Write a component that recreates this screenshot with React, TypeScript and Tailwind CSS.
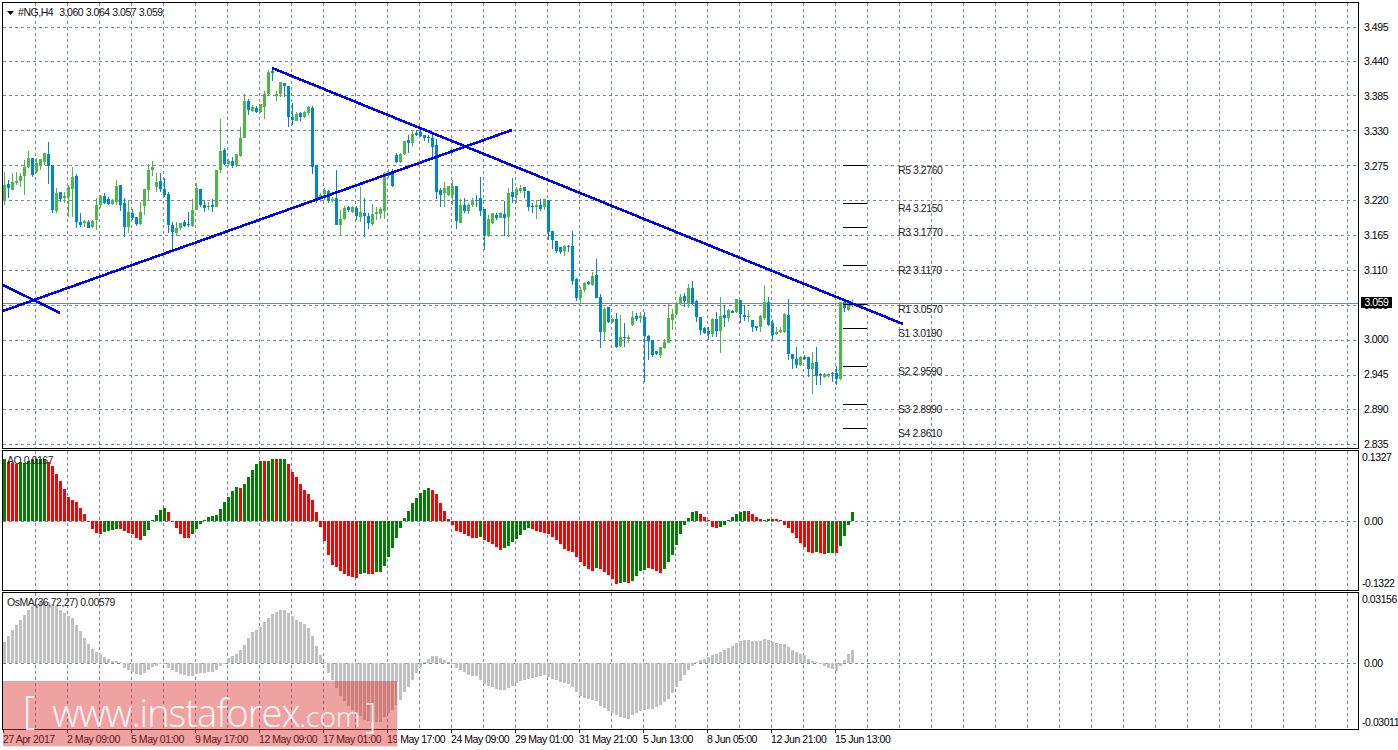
// #NG,H4 chart with AO and OsMA sub-windows
type Candle = [number, number, number, number, number] // wick top, body top, body bottom, wick bottom, up (all y values x3)

const candlesLeft: Candle[] = [
  [517,555,600,615,1],[540,552,565,595,0],[520,545,570,570,1],[515,543,550,555,1],[520,528,543,560,1],[480,500,528,585,1],[452,474,500,505,1],[474,474,525,530,0],
  [475,490,515,520,1],[478,478,498,510,1],[460,460,487,495,1],[426,462,497,552,0],[496,496,630,640,0],[565,578,633,640,1],[576,576,598,605,0],[575,588,594,610,1],
  [555,560,590,650,1],[500,532,567,652,1],[522,528,665,685,0],[640,666,675,680,0],[660,664,668,680,1],[660,665,683,685,0],[660,664,682,685,1],[595,615,660,690,1],
  [585,588,615,625,1],[578,588,608,612,0],[592,598,612,615,0],[598,603,612,615,1],[540,558,605,615,1],[555,555,615,632,0],[595,610,682,710,0],[600,637,682,698,1],
  [628,640,654,660,0],[650,650,672,678,0],[605,637,672,675,1],[568,568,617,645,1],[492,510,570,600,1],[482,501,510,528,1],[520,546,560,575,1],[520,544,567,575,0],
  [535,568,585,590,0],[575,582,675,700,0],[665,675,696,750,0],[665,684,698,708,1],[668,670,684,690,1],[660,666,678,682,0],[635,672,675,680,0],[598,630,678,680,1],
  [548,565,630,630,1],[567,567,615,620,0],[600,615,623,635,0],[605,618,622,630,1],[598,616,621,635,0],[510,510,620,620,1],[358,453,510,520,1],[445,450,492,495,0],
  [478,484,492,498,1],[470,484,498,503,0],[462,463,496,500,1],[382,415,468,470,1],[282,304,414,415,1],[296,303,330,345,0],[316,322,332,336,1],[318,323,335,338,0],
  [312,312,335,338,1],[272,282,320,358,1],[210,215,282,284,1],[203,214,218,242,0],[272,283,288,302,1],[247,247,283,290,1],[250,250,258,292,0],[258,258,350,380,0],
  [310,352,360,375,0],[336,342,362,362,1],[335,340,351,362,0],[332,335,350,355,1],[318,320,340,345,1],[318,324,500,522,0],[496,496,600,610,0],[578,586,594,605,1],
  [565,570,583,600,1],[570,574,604,608,0],[590,597,603,605,1],[510,594,674,675,0],[630,657,675,706,1],[618,624,657,660,1],[618,621,630,635,0],[618,621,635,640,1],
  [618,624,648,660,0],[562,636,650,665,1],[595,640,647,710,0],[640,648,668,688,0],[612,642,672,678,1],[620,636,642,660,1],[620,627,642,657,1],[515,520,633,658,1],
  [508,520,528,535,1],[508,518,558,562,0],[460,464,487,490,0],[458,462,486,488,1],[423,423,462,465,1],[405,420,430,458,0],[392,402,430,440,1],[390,398,404,408,0],
  [380,396,408,412,0],[405,405,413,424,0],[405,411,413,428,0],[405,413,441,470,0],[418,436,575,597,0],[565,570,585,620,0],[545,565,580,620,1],[558,558,585,588,1],
  [540,558,585,615,1],[558,558,662,686,0],[598,615,668,668,1],
]

// read off the right half of the chart, 450 lower down
const candlesRight: Candle[] = ([
  [145,165,183,190,0],[158,165,183,192,1],[145,152,165,170,1],[135,150,152,170,0],[82,145,183,198,0],[178,178,255,300,0],[195,208,258,260,1],[188,190,218,222,1],
  [188,195,203,210,0],[185,188,203,205,1],[152,192,204,258,0],[115,128,200,260,1],[85,126,140,160,0],[112,118,135,160,1],[105,115,122,130,1],[112,112,122,145,0],
  [122,122,172,183,0],[158,168,172,190,0],[150,165,172,206,1],[148,165,178,182,0],[146,148,172,180,1],[150,150,246,270,0],[244,244,270,298,0],[272,272,303,308,0],
  [290,290,305,312,0],[285,288,303,318,1],[284,288,292,305,0],[243,288,393,405,0],[385,387,443,452,0],[412,420,443,458,1],[395,398,421,425,1],[392,397,402,406,0],
  [365,378,405,408,1],[327,376,443,445,0],[432,440,545,593,0],[470,476,545,570,1],[470,472,517,520,0],[505,508,516,520,1],[490,508,590,593,0],[495,561,588,590,1],
  [520,560,565,590,0],[555,562,568,578,1],[483,502,525,528,1],[490,498,508,513,0],[486,498,504,520,1],[485,502,557,696,0],[555,558,572,630,0],[570,570,615,622,0],
  [604,604,612,615,0],[590,592,615,624,1],[568,576,594,597,1],[462,504,578,580,1],[478,492,510,540,1],[455,458,492,495,1],[432,440,458,465,1],[430,438,453,470,0],
  [402,414,458,475,1],[393,414,462,465,0],[450,452,500,515,0],[500,500,540,555,0],[530,534,548,552,0],[530,544,552,570,0],[505,507,552,560,1],[486,506,542,560,0],
  [442,498,542,608,1],[465,495,503,530,0],[478,480,503,517,1],[480,483,488,490,0],[447,447,486,490,1],[450,450,492,520,0],[465,495,500,513,0],[480,497,500,515,1],
  [510,510,530,545,0],[528,528,534,542,0],[496,498,530,546,1],[405,456,504,510,1],[440,456,525,528,0],[510,520,556,570,0],[530,546,552,556,1],[530,540,546,550,1],
  [490,492,546,548,1],[447,495,612,630,0],[612,612,628,658,0],[590,627,645,655,0],[618,620,645,648,1],[615,621,628,630,0],[620,622,658,680,0],[605,638,658,732,1],
  [590,636,678,705,0],[668,672,675,705,0],[668,672,680,685,1],[668,672,678,682,1],[665,670,672,695,0],[648,670,688,705,0],[456,456,688,690,1],[450,456,474,486,0],
  [455,462,480,484,1],[448,460,463,470,1],
] as Candle[]).map(([a, b, c, d, up]) => [a + 450, b + 450, c + 450, d + 450, up] as Candle)

const candles = [...candlesLeft, ...candlesRight]

// bar heights above/below the zero line, x3
const aoValues = [
  187,178,175,172,176,175,181,186,187,187,187,178,166,142,121,97,73,64,58,40,22,-2,-23,-35,-38,-32,-29,-26,-23,-23,-29,-35,-38,-50,-56,-44,-26,1,19,34,40,28,-2,-20,-38,-50,-50,-38,-23,-8,
  4,13,16,19,37,58,73,91,103,100,112,133,154,172,181,181,181,187,187,187,187,172,148,133,112,94,82,64,28,-17,-59,-101,-131,-137,-149,-158,-164,-167,-170,-158,-155,-158,-158,-152,-152,-134,-107,-80,-50,-20,
  10,31,55,70,85,94,100,94,82,55,31,7,-11,-29,-32,-38,-44,-50,-50,-47,-56,-62,-68,-77,-86,-80,-74,-62,-53,-41,-26,-20,-23,-29,-32,-35,-38,-47,-56,-68,-83,-89,-92,-107,-122,-134,-143,-149,-140,-143,
  -152,-161,-173,-188,-185,-182,-185,-179,-164,-149,-146,-140,-143,-149,-155,-143,-122,-101,-71,-38,-11,10,28,31,22,13,1,-17,-20,-17,-11,4,13,22,28,31,31,22,13,7,4,7,7,7,4,-11,-20,-35,-50,-65,
  -77,-92,-95,-92,-95,-98,-95,-95,-95,-74,-44,-11,28,
]

// green/red run lengths, starting with green
const aoRuns = [1,3,7,14,4,6,6,6,12,1,5,1,2,1,2,18,2,2,14,12,1,5,7,16,1,5,2,1,4,4,9,5,7,4,2,11,1,2,2,1,4]
const aoColors = aoRuns.flatMap((n, i) => Array<string>(n).fill(i % 2 === 0 ? '#008000' : '#ff0000'))

const osmaValues = [
  64,82,100,115,130,145,160,170,178,182,184,182,178,170,160,151,142,136,115,97,76,58,43,34,28,19,13,7,7,1,-14,-20,-26,-32,-35,-30,-22,-12,-8,-4,-2,-14,-22,-26,-32,-35,-38,-38,-34,-31,
  -29,-28,-28,-20,-8,-4,14,22,28,40,55,76,92,100,108,122,134,148,154,158,160,150,142,130,122,118,106,82,52,25,1,-30,-50,-76,-100,-115,-130,-140,-148,-158,-172,-175,-178,-178,-176,-162,-150,-140,-125,-110,
  -88,-72,-50,-30,-12,1,12,22,20,14,10,4,-2,-14,-20,-28,-35,-38,-40,-50,-62,-68,-71,-77,-80,-80,-74,-68,-59,-53,-50,-47,-44,-41,-38,-35,-41,-47,-50,-56,-59,-62,-71,-86,-100,-105,-107,-112,-115,-128,
  -134,-143,-149,-155,-161,-164,-167,-155,-149,-144,-140,-137,-137,-133,-125,-116,-107,-89,-71,-53,-35,-20,-8,3,8,12,18,24,27,33,39,45,51,60,66,69,69,66,66,66,72,69,63,60,57,57,48,39,33,27,
  24,12,6,1,-3,-9,-15,-18,-23,-8,9,27,39,
]

const gridX = Array.from({ length: 42 }, (_, i) => 35 + i * 32)
const gridY = [27, 61, 95, 130, 165, 200, 235, 270, 305, 340, 375, 409, 444]

const priceLabels = ['3.495','3.440','3.385','3.330','3.275','3.220','3.165','3.110','3.055','3.000','2.945','2.890','2.835']

const pivots: [string, number, number][] = [
  ['R5 3.2760', 165, 174],['R4 3.2150', 203, 212],['R3 3.1770', 227, 236],['R2 3.1170', 265, 274],['R1 3.0570', 304, 313],
  ['S1 3.0190', 328, 337],['S2 2.9590', 366, 375],['S3 2.8990', 404, 413],['S4 2.8610', 428, 437],
]

const timeLabels = [
  '27 Apr 2017','2 May 09:00','5 May 01:00','9 May 17:00','12 May 09:00','17 May 01:00','19 May 17:00','24 May 09:00',
  '29 May 01:00','31 May 21:00','5 Jun 13:00','8 Jun 05:00','12 Jun 21:00','15 Jun 13:00',
]

const UP = '#4cb848'
const DOWN = '#0087c7'
const GRID = '#778899'
const chartFont = 'font-["Liberation_Sans",Arial,sans-serif] text-[10.5px] tracking-[-0.45px]'

function Grid({ top, bottom, zeroY }: { top: number; bottom: number; zeroY?: number[] }) {
  return (
    <g stroke={GRID} strokeDasharray="3 3" shapeRendering="crispEdges">
      {gridX.map((x) => (
        <line key={x} x1={x + 0.5} x2={x + 0.5} y1={top} y2={bottom} />
      ))}
      {zeroY?.map((y) => (
        <line key={y} x1={3} x2={1358} y1={y + 0.5} y2={y + 0.5} />
      ))}
    </g>
  )
}

function Bars({ values, colors, zero }: { values: number[]; colors: (i: number) => string; zero: number }) {
  return (
    <g shapeRendering="crispEdges">
      {values.map((v, i) => {
        const h = Math.max(Math.abs(v) / 3, 1)
        return <rect key={i} x={3 + i * 4} y={v > 0 ? zero - h : zero} width={3} height={h} fill={colors(i)} />
      })}
    </g>
  )
}

function MainPanel() {
  return (
    <div className={`flex h-[447px] ${chartFont}`}>
      <div className="relative w-[1357px] border border-black bg-white">
        <svg viewBox="3 3 1355 445" width={1355} height={445} className="block">
          <Grid top={3} bottom={448} zeroY={gridY} />
          <line x1={3} x2={1358} y1={303.5} y2={303.5} stroke={GRID} shapeRendering="crispEdges" />
          <g shapeRendering="crispEdges">
            {candles.map(([wickTop, bodyTop, bodyBottom, wickBottom, up], i) => {
              const x = 3 + i * 4
              return (
                <g key={i} fill={up ? UP : DOWN}>
                  <rect x={x + 1} y={wickTop / 3} width={1} height={(wickBottom - wickTop) / 3} />
                  <rect x={x} y={bodyTop / 3} width={3} height={Math.max((bodyBottom - bodyTop) / 3, 1)} />
                </g>
              )
            })}
            {pivots.map(([name, y]) => (
              <line key={name} x1={843} x2={867} y1={y + 0.5} y2={y + 0.5} stroke="#000" />
            ))}
          </g>
          <g stroke="#0000ff" strokeWidth={2.6} shapeRendering="crispEdges">
            <line x1={3} y1={285} x2={60} y2={313} />
            <line x1={3} y1={311} x2={512} y2={130} />
            <line x1={272} y1={68} x2={903} y2={324} />
          </g>
          <g fill="#222">
            {pivots.map(([name, , y]) => (
              <text key={name} x={898} y={y}>
                {name}
              </text>
            ))}
          </g>
        </svg>
        {/* chart title */}
        <div className="absolute left-[4px] top-[2px] flex items-center text-[#111]">
          <svg viewBox="0 0 7 4" width={7} height={4} className="mr-[4px]">
            <path d="M0 0h7L3.5 4z" fill="#000" />
          </svg>
          <span className="mr-[6px]">#NG,H4</span>
          <span>3.060 3.064 3.057 3.059</span>
        </div>
      </div>
      <div className="relative w-[40px]">
        <div className="flex flex-col pl-[5px] pt-[8px] text-black">
          {priceLabels.map((label) => (
            <div key={label} className="flex h-[34.75px] items-center">
              {label}
            </div>
          ))}
        </div>
        {/* current bid */}
        <span className="absolute left-[2px] top-[295px] flex h-[11px] w-[31px] items-center justify-center bg-black text-white">
          3.059
        </span>
      </div>
    </div>
  )
}

function AoPanel() {
  return (
    <div className={`mt-px flex h-[141px] ${chartFont}`}>
      <div className="relative w-[1357px] border border-black bg-white">
        <svg viewBox="3 451 1355 139" width={1355} height={139} className="block">
          <Grid top={451} bottom={590} zeroY={[521]} />
          <Bars values={aoValues} colors={(i) => aoColors[i]} zero={521} />
        </svg>
        <span className="absolute left-[4px] top-[2px] text-[#222]">AO 0.0167</span>
      </div>
      <div className="flex w-[40px] flex-col pl-[3px] pt-px leading-[12px] text-black">
        <span>0.1327</span>
        <span className="ml-[2px] mt-[52px]">0.00</span>
        <span className="mt-[50px]">-0.1322</span>
      </div>
    </div>
  )
}

function OsmaPanel() {
  return (
    <div className={`mt-px flex h-[138px] ${chartFont}`}>
      <div className="relative w-[1357px] border border-black bg-white">
        <svg viewBox="3 593 1355 136" width={1355} height={136} className="block">
          <Grid top={593} bottom={729} zeroY={[663]} />
          <Bars values={osmaValues} colors={() => '#c0c0c0'} zero={663} />
        </svg>
        <span className="absolute left-[4px] top-[2px] text-[#222]">OsMA(36,72,27) 0.00579</span>
      </div>
      <div className="flex w-[40px] flex-col pl-[3px] pt-px leading-[12px] text-black">
        <span>0.03156</span>
        <span className="ml-[2px] mt-[52px]">0.00</span>
        <span className="mt-[47px]">-0.03011</span>
      </div>
    </div>
  )
}

function TimeAxis() {
  return (
    <div className={`flex pl-px ${chartFont}`}>
      {timeLabels.map((label) => (
        <div key={label} className="w-[64px]">
          <div className="h-[3px] w-px bg-black" />
          <div className="-mt-px whitespace-nowrap text-black">{label}</div>
        </div>
      ))}
    </div>
  )
}

function Watermark() {
  return (
    <div className="absolute left-[3px] top-[681px] flex h-[65px] w-[394px] items-start bg-[#d93030]/45 pl-[20px] pt-[13px] font-['Open_Sans',sans-serif] font-light leading-[30px] text-white/90 shadow-[1px_1px_0_#e4e4e4]">
      <span className="text-[38px]">[</span>
      <span className="ml-[17px] mt-[3px] whitespace-nowrap text-[38px] tracking-[-1px]">
        www.instaforex<span className="text-[28px] tracking-normal">.com</span>
      </span>
      <span className="ml-[5px] mt-[6px] text-[34px]">]</span>
    </div>
  )
}

export default function App() {
  return (
    <div className="relative h-[750px] w-[1398px] overflow-hidden bg-white pl-[2px] pt-[2px]">
      <MainPanel />
      <AoPanel />
      <OsmaPanel />
      <TimeAxis />
      <Watermark />
    </div>
  )
}
